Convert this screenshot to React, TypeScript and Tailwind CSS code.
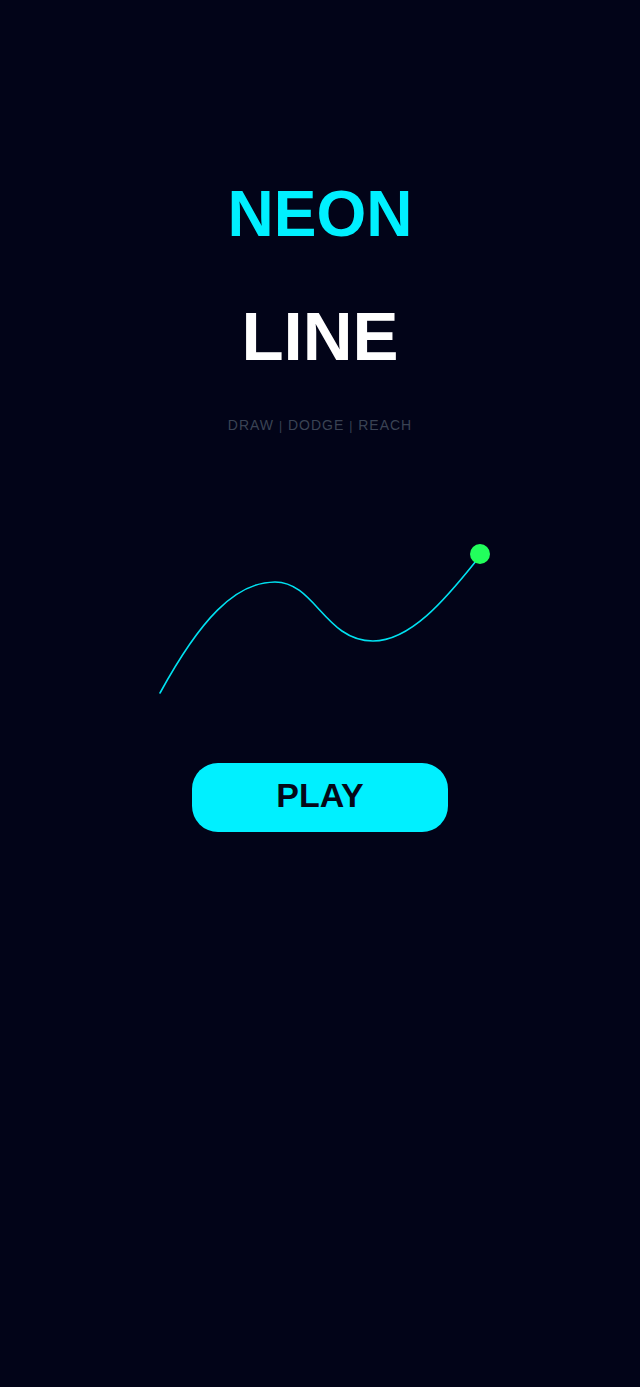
import React from "react";

export default function App() {
  return (
    <div
      className="w-full min-h-[1387px] bg-[#020418] flex flex-col items-center pt-[182px]"
      style={{ fontFamily: '"Liberation Sans", Arial, Helvetica, sans-serif' }}
    >
      <h1 className="text-[64px] leading-none font-bold text-[#00f0ff] h-[64px]">NEON</h1>
      <h2 className="mt-[56px] text-[69px] leading-none font-bold text-white h-[69px]">LINE</h2>
      <p className="mt-[47px] text-[14px] leading-none tracking-[1px] text-[#3a4354] h-[14px]">
        DRAW <span className="text-[12px]">|</span> DODGE <span className="text-[12px]">|</span> REACH
      </p>
      <svg
        className="mt-[103px] block"
        width="640"
        height="170"
        viewBox="0 535 640 170"
      >
        <path
          d="M160,693 C200,620 235,582 275,582 C315,582 325,641 373,641 C410,641 445,600 476,561"
          fill="none"
          stroke="#00e1f0"
          strokeWidth="1.6"
          strokeLinecap="round"
        />
        <circle cx="480" cy="554" r="10" fill="#22ff5c" />
      </svg>
      <button className="mt-[58px] w-[256px] h-[69px] rounded-[26px] bg-[#00f0ff] flex items-center justify-center pb-[5px]">
        <span className="text-[34px] leading-none font-bold text-[#050818]">PLAY</span>
      </button>
    </div>
  );
}
